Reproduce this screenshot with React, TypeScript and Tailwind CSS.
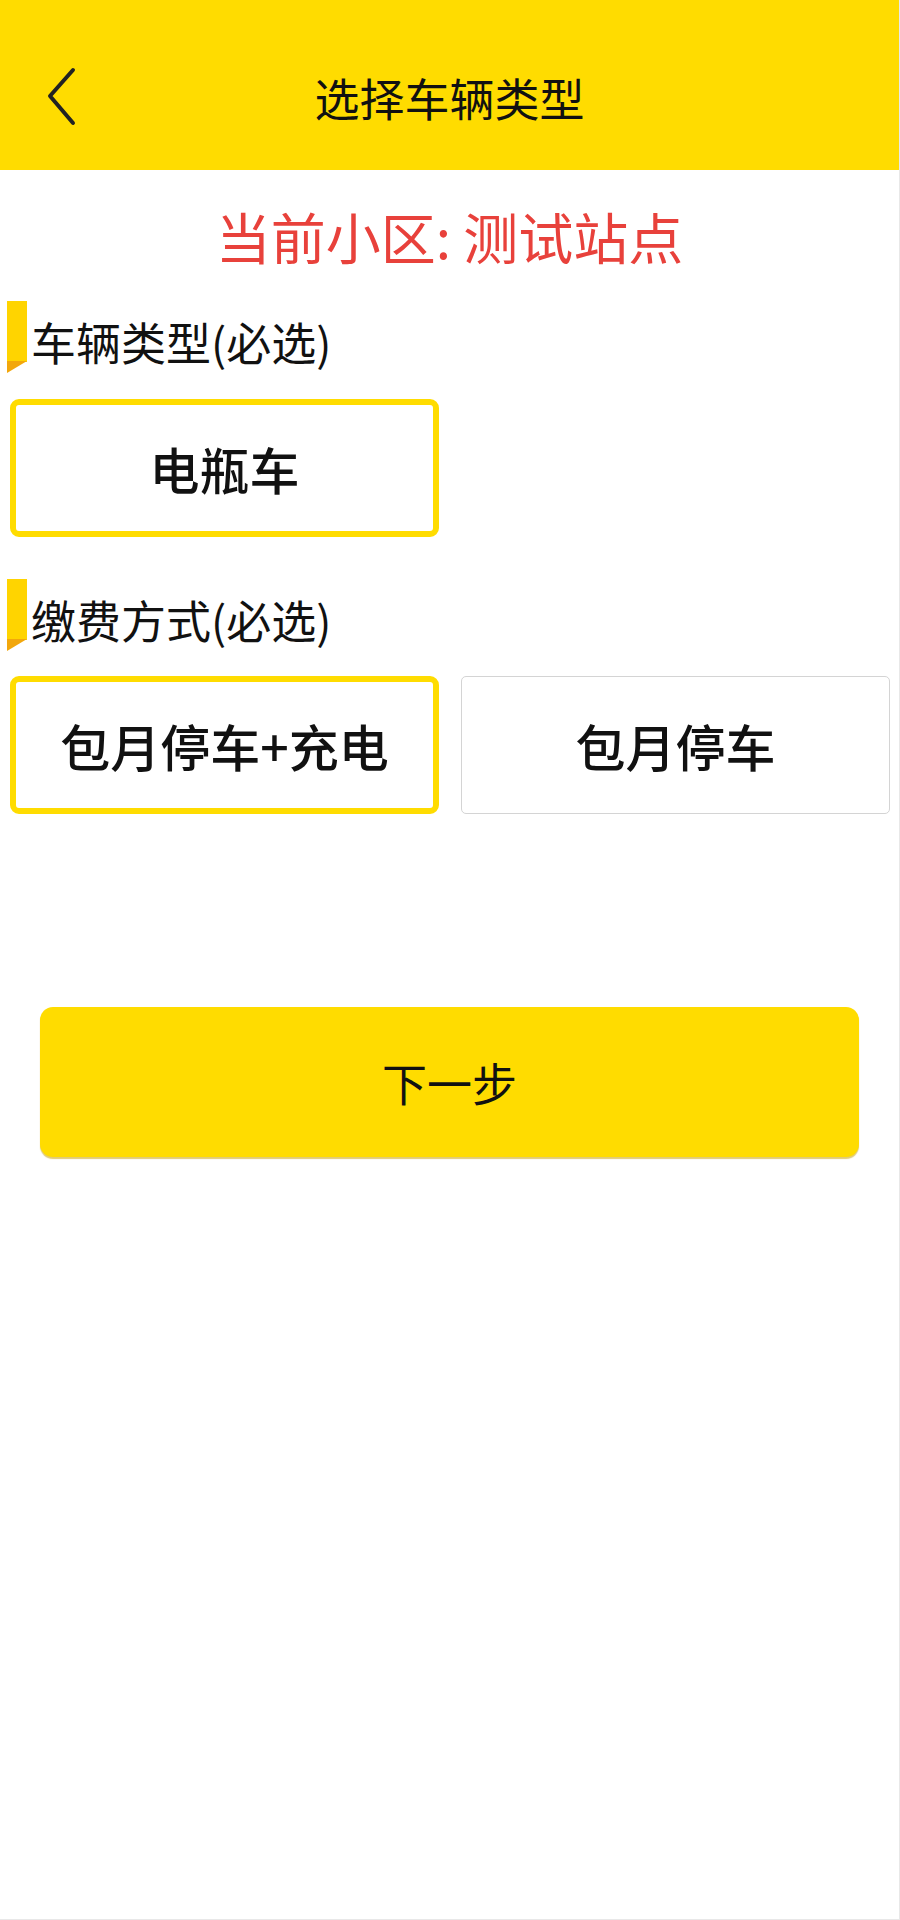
const YELLOW = "#FFDC00";

const SectionLabel = ({ text }: { text: string }) => (
  <div className="flex h-[72px] items-center pl-[7px]">
    <svg width="20" height="72" viewBox="0 0 20 72" className="shrink-0">
      <rect x="0" y="0" width="20" height="61" fill="#FFD400" />
      <polygon points="0,60 20,60 0,72" fill="#F2A70C" />
    </svg>
    <span className="ml-[4px] mt-[8px] text-[45px] leading-none text-[#111]">{text}</span>
  </div>
);

const Option = ({ label, selected }: { label: string; selected?: boolean }) => (
  <div
    className={
      selected
        ? "flex h-[138px] w-[429px] items-center justify-center rounded-[9px] border-[6px] border-[#FFDC00] bg-white"
        : "flex h-[138px] w-[429px] items-center justify-center rounded-[5px] border-[1.5px] border-[#d4d4d4] bg-white"
    }
  >
    <span className="text-[50px] font-medium leading-none text-[#111]">{label}</span>
  </div>
);

export default function App() {
  return (
    <div
      className="min-h-[1920px] w-[900px] border-r border-b border-[#e8e8e8] bg-white"
      style={{ fontFamily: '"Noto Sans CJK SC", "Noto Sans", sans-serif' }}
    >
      <header className="grid h-[170px] grid-cols-[1fr_auto_1fr] items-center pt-[24px]" style={{ background: YELLOW }}>
        <div className="pl-[46px]">
          <svg width="34" height="60" viewBox="0 0 34 60" fill="none">
            <path d="M27 3 L4 29 L27 56" stroke="#222" strokeWidth="4" strokeLinecap="round" strokeLinejoin="round" />
          </svg>
        </div>
        <h1 className="text-[45px] font-normal leading-none text-[#111]">选择车辆类型</h1>
        <div />
      </header>

      <div className="flex h-[131px] items-center justify-center">
        <span className="text-[55px] leading-none text-[#E8413B]">当前小区: 测试站点</span>
      </div>

      <SectionLabel text="车辆类型(必选)" />
      <div className="mt-[26px] flex pl-[10px]">
        <Option label="电瓶车" selected />
      </div>

      <div className="mt-[42px]">
        <SectionLabel text="缴费方式(必选)" />
      </div>
      <div className="mt-[25px] flex gap-[22px] pl-[10px]">
        <Option label="包月停车+充电" selected />
        <Option label="包月停车" />
      </div>

      <div className="mx-[40px] mt-[193px]">
        <button
          className="flex h-[150px] w-full items-center justify-center rounded-[13px] shadow-[0_2px_1px_rgba(200,160,0,0.55)]"
          style={{ background: YELLOW }}
        >
          <span className="text-[45px] leading-none text-[#111]">下一步</span>
        </button>
      </div>
    </div>
  );
}
